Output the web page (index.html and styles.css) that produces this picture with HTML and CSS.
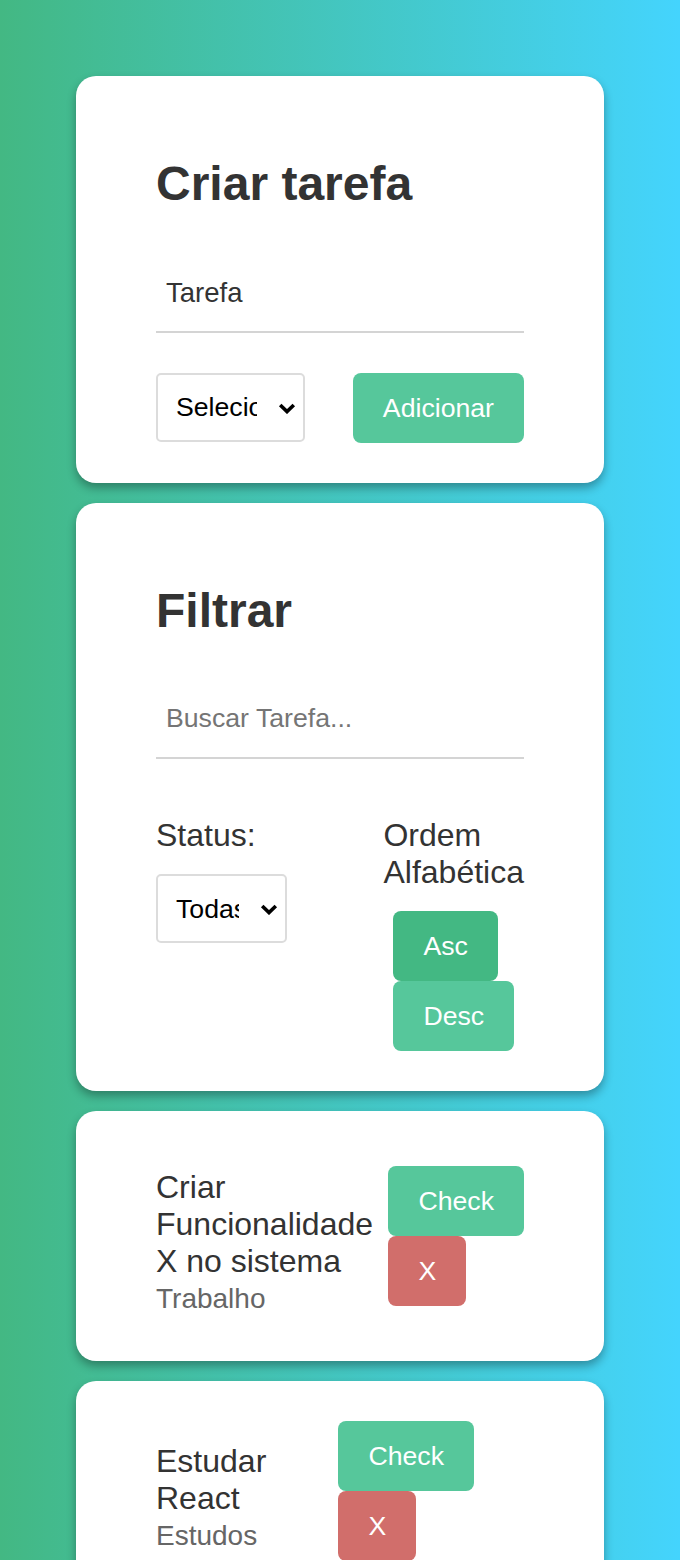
FILE: index.html
```html
<!DOCTYPE html>
<html lang="pt-BR">
<head>
<meta charset="utf-8">
<title>Lista de Tarefas</title>
<link rel="stylesheet" href="styles.css">
</head>
<body>
<div class="app">
  <section class="card">
    <h1 class="card-title">Criar tarefa</h1>
    <input class="text-input text-input-value" type="text" value="Tarefa">
    <div class="create-row">
      <div class="select-wrap select-wide">
        <select class="select">
          <option>Selecione uma categoria</option>
          <option>Trabalho</option>
          <option>Pessoal</option>
          <option>Estudos</option>
        </select>
        <svg class="chevron" viewBox="0 0 18 11" width="18" height="11" aria-hidden="true"><polyline points="2.2,2 9,8.6 15.8,2" fill="none" stroke="#000" stroke-width="3.6"/></svg>
      </div>
      <button type="button" class="btn">Adicionar</button>
    </div>
  </section>

  <section class="card">
    <h1 class="card-title">Filtrar</h1>
    <input class="text-input text-input-search" type="text" placeholder="Buscar Tarefa...">
    <div class="filter-row">
      <div class="filter-col">
        <p class="filter-label">Status:</p>
        <div class="select-wrap select-narrow">
          <select class="select">
            <option>Todas</option>
            <option>Completas</option>
            <option>Incompletas</option>
          </select>
          <svg class="chevron" viewBox="0 0 18 11" width="18" height="11" aria-hidden="true"><polyline points="2.2,2 9,8.6 15.8,2" fill="none" stroke="#000" stroke-width="3.6"/></svg>
        </div>
      </div>
      <div class="filter-col order-col">
        <p class="filter-label">Ordem Alfabética</p>
        <div class="order-buttons"><button type="button" class="btn btn-active">Asc</button> <button type="button" class="btn">Desc</button></div>
      </div>
    </div>
  </section>

  <section class="card todo">
    <div class="todo-content">
      <p class="todo-text">Criar Funcionalidade X no sistema</p>
      <p class="todo-category">Trabalho</p>
    </div>
    <div class="todo-actions"><button type="button" class="btn">Check</button> <button type="button" class="btn btn-danger">X</button></div>
  </section>

  <section class="card todo">
    <div class="todo-content">
      <p class="todo-text">Estudar React</p>
      <p class="todo-category">Estudos</p>
    </div>
    <div class="todo-actions"><button type="button" class="btn">Check</button> <button type="button" class="btn btn-danger">X</button></div>
  </section>
</div>
</body>
</html>
```

FILE: styles.css
```css
html, body {
  margin: 0;
  padding: 0;
}

body {
  background: linear-gradient(to right, #43b883, #44d4fd);
  font-family: "Liberation Sans", Arial, Helvetica, sans-serif;
  color: #333;
}

.app {
  width: 528px;
  margin: 0 auto;
  padding: 76px 0 40px;
  display: flex;
  flex-direction: column;
  gap: 20px;
}

.card {
  background: #fff;
  border-radius: 20px;
  padding: 40px 80px;
  box-shadow: 0 5px 10px rgba(0, 0, 0, 0.32);
}

.card-title {
  font-size: 48px;
  font-weight: bold;
  margin: 40px 0 49px;
  color: #333;
}

.text-input {
  display: block;
  box-sizing: border-box;
  width: 100%;
  border: none;
  border-bottom: 2px solid #d4d4d4;
  padding: 18px 10px 22px;
  margin: 0 0 40px;
  font-family: inherit;
  font-size: 26.67px;
  line-height: 30.67px;
  color: #333;
  background: transparent;
  outline: none;
}

.text-input-value {
  font-size: 27.5px;
}

.text-input-search {
  padding: 16px 10px 24px;
}

.text-input::placeholder {
  color: #757575;
}

.create-row {
  display: flex;
  justify-content: space-between;
  align-items: flex-start;
}

.select-wrap {
  position: relative;
}

.select-wide {
  width: 149px;
}

.select-narrow {
  width: 131px;
}

.select {
  -webkit-appearance: none;
  appearance: none;
  display: block;
  box-sizing: border-box;
  width: 100%;
  height: 69px;
  border: 2px solid #dcdcdc;
  border-radius: 5px;
  background: #fff;
  padding: 0 46px 0 18px;
  font-family: inherit;
  font-size: 26.67px;
  color: #000;
  outline: none;
}

.chevron {
  position: absolute;
  right: 9px;
  top: 30px;
  pointer-events: none;
}

.btn {
  display: inline-block;
  border: none;
  border-radius: 8px;
  padding: 20px 30px;
  font-family: inherit;
  font-size: 26.67px;
  line-height: 30px;
  color: #fff;
  background: #56c79b;
  cursor: pointer;
}

.btn-active {
  background: #43b883;
}

.btn-danger {
  background: #d16e6b;
}

.filter-row {
  display: flex;
  justify-content: space-between;
  align-items: flex-start;
  padding-top: 18px;
}

.filter-label {
  margin: 0 0 20px;
  font-size: 32px;
  color: #333;
}

.order-col {
  width: min-content;
}

.order-buttons {
  padding-left: 10px;
  font-size: 26.67px;
}

.todo {
  display: flex;
  align-items: center;
  gap: 12px;
}

.todo-content {
  padding: 18px 0 6px;
}

.todo-text {
  margin: 0;
  font-size: 32px;
  color: #333;
}

.todo-category {
  margin: 3px 0 0;
  font-size: 28px;
  color: #666;
}

.todo-actions {
  font-size: 26.67px;
}
```
